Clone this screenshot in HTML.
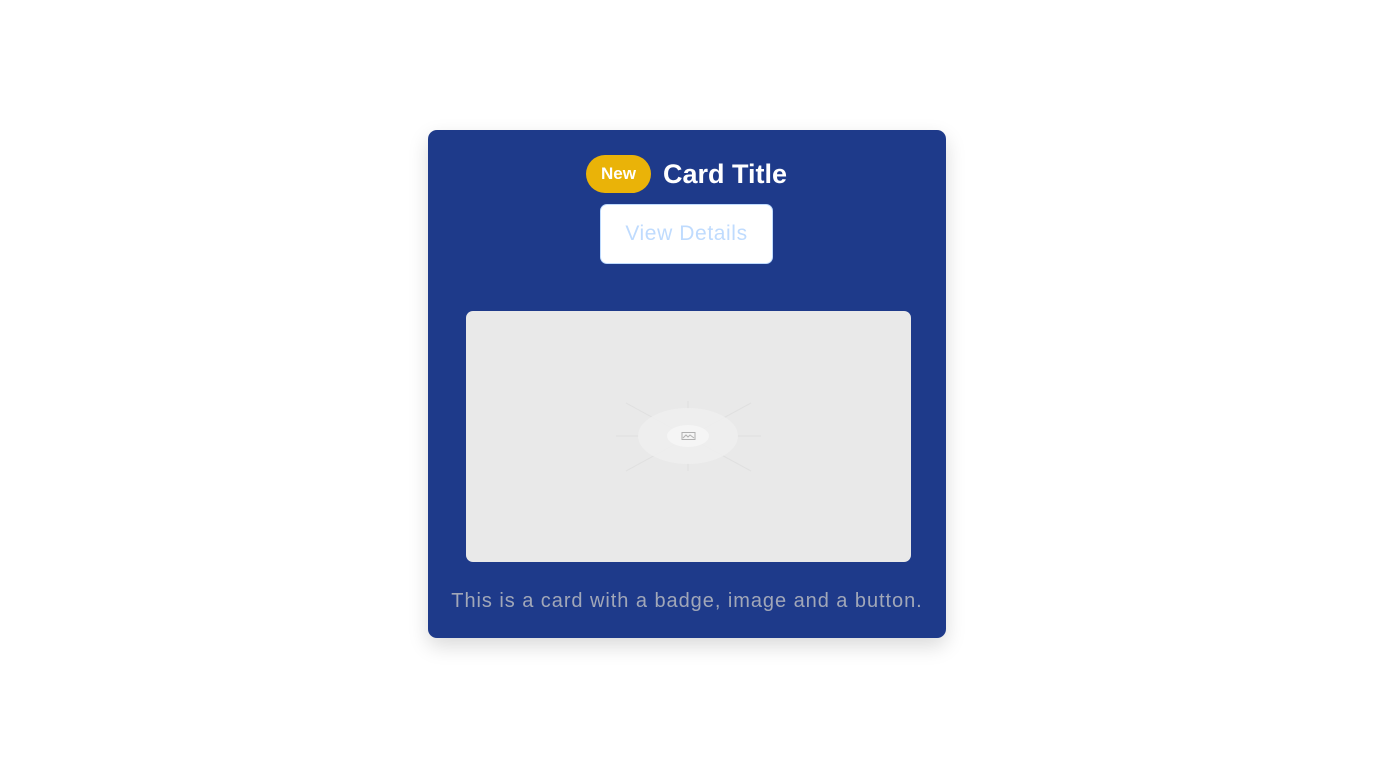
<!DOCTYPE html>
<html><head><meta charset="utf-8"><style>
html,body{margin:0;padding:0;background:#fff;width:1376px;height:768px;overflow:hidden;font-family:"Liberation Sans",sans-serif;}
.card{position:absolute;left:428px;top:130px;width:518px;height:508px;background:#1e3a8a;border-radius:9px;box-shadow:0 8px 20px rgba(0,0,0,0.15);}
.badge{position:absolute;left:158px;top:25px;width:65px;height:38px;border-radius:19px;background:#eab308;color:#fff;font-weight:bold;font-size:17px;line-height:38px;text-align:center;}
.title{position:absolute;left:235px;top:26px;color:#fff;font-weight:bold;font-size:27px;line-height:36px;}
.btn{position:absolute;left:172px;top:74px;width:171px;height:58px;background:#fff;border:1px solid #bfdbfe;border-radius:7px;color:#bfdbfe;font-size:21px;line-height:58px;text-align:center;letter-spacing:0.6px;}
.img{position:absolute;left:38px;top:181px;width:445px;height:251px;background:#e9e9e9;border-radius:7px;overflow:hidden;}
.desc{position:absolute;left:0;width:518px;top:458px;text-align:center;color:#a1a7b8;font-size:20px;line-height:26px;letter-spacing:0.95px;}
</style></head><body>
<div class="card">
<div class="badge">New</div>
<div class="title">Card Title</div>
<div class="btn">View Details</div>
<div class="img"><svg width="445" height="251">
<g stroke="#e0e0e0" stroke-width="1" fill="none">
<line x1="160" y1="92" x2="285" y2="160"/><line x1="160" y1="160" x2="285" y2="92"/>
<line x1="150" y1="125" x2="295" y2="125"/><line x1="222" y1="90" x2="222" y2="160"/>
</g>
<ellipse cx="222" cy="125" rx="50" ry="28" fill="#efefef" fill-opacity="0.85"/>
<ellipse cx="222" cy="125" rx="21" ry="11" fill="#f5f5f5"/>
<g stroke="#b0b0b0" fill="none" stroke-width="1"><rect x="216" y="121.5" width="13" height="7"/><path d="M217 127 l3 -3 l2 2 l2 -2 l4 3"/></g>
</svg></div>
<div class="desc">This is a card with a badge, image and a button.</div>
</div>
</body></html>
